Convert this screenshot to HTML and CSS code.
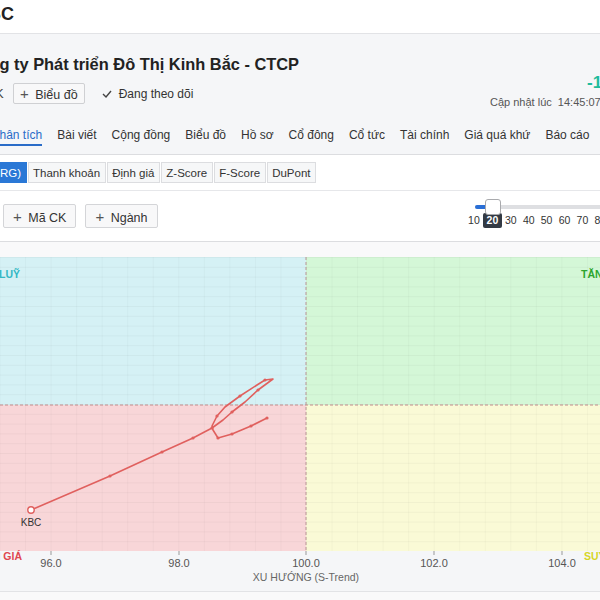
FILE: index.html
```html
<!DOCTYPE html>
<html lang="vi">

<head>
    <meta charset="UTF-8">
    <meta name="viewport" content="width=device-width, initial-scale=1.0">
    <title>KBC - Phân tích</title>
    <link rel="stylesheet" href="styles.css">
</head>

<body>
    <!-- Thanh trên cùng -->
    <div class="topbar">
        <span class="logo">KBC</span>
    </div>

    <!-- Thông tin mã -->
    <div class="stock-head">
        <div class="head-main">
            <div class="head-left">
                <h1 class="company">Tổng Công ty Phát triển Đô Thị Kinh Bắc - CTCP</h1>
                <div class="head-actions">
                    <span class="ticker">K</span>
                    <button class="btn-outline"><span class="plus">+</span> Biểu đồ</button>
                    <span class="follow">
                        <svg class="check" width="10" height="8" viewBox="0 0 10 8">
                            <path d="M1 4 L4 7 L9 1" fill="none" stroke="#444" stroke-width="1.4" />
                        </svg>
                        Đang theo dõi
                    </span>
                </div>
            </div>
            <div class="head-right">
                <div class="change">-1,35 (-4,12%)</div>
                <div class="updated">Cập nhật lúc&nbsp; 14:45:07 | Vol: 12.345.600</div>
            </div>
        </div>

        <nav class="tabs">
            <a class="tab active">Phân tích</a>
            <a class="tab">Bài viết</a>
            <a class="tab">Cộng đồng</a>
            <a class="tab">Biểu đồ</a>
            <a class="tab">Hồ sơ</a>
            <a class="tab">Cổ đông</a>
            <a class="tab">Cổ tức</a>
            <a class="tab">Tài chính</a>
            <a class="tab">Giá quá khứ</a>
            <a class="tab">Báo cáo</a>
        </nav>
    </div>

    <!-- Các loại phân tích -->
    <div class="tool-panel">
        <div class="sub-tabs">
            <button class="sub-tab active">Sức mạnh (RRG)</button>
            <button class="sub-tab">Thanh khoản</button>
            <button class="sub-tab">Định giá</button>
            <button class="sub-tab">Z-Score</button>
            <button class="sub-tab">F-Score</button>
            <button class="sub-tab">DuPont</button>
        </div>

        <div class="controls">
            <div class="add-buttons">
                <button class="btn-add"><span class="plus">+</span> Mã CK</button>
                <button class="btn-add"><span class="plus">+</span> Ngành</button>
            </div>
            <div class="slider">
                <div class="track">
                    <div class="fill"></div>
                    <div class="thumb"></div>
                </div>
                <div class="marks">
                    <span>10</span>
                    <span class="current">20</span>
                    <span>30</span>
                    <span>40</span>
                    <span>50</span>
                    <span>60</span>
                    <span>70</span>
                    <span>80</span>
                </div>
            </div>
        </div>
    </div>

    <!-- Biểu đồ RRG -->
    <div class="chart-wrap">
        <svg class="rrg" width="600" height="334" viewBox="0 0 600 334">
            <defs>
                <pattern id="gridV" x="25.06" y="0" width="25.54" height="9.8" patternUnits="userSpaceOnUse">
                    <path d="M0 0 V9.8" stroke="rgba(0,0,0,0.05)" stroke-width="1" />
                    <path d="M0 0.5 H25.54" stroke="rgba(0,0,0,0.035)" stroke-width="1" />
                </pattern>
            </defs>

            <!-- Bốn góc phần tư -->
            <rect x="0" y="0" width="306" height="148" fill="#d5f1f5" />
            <rect x="306" y="0" width="294" height="148" fill="#d4f7d7" />
            <rect x="0" y="148" width="306" height="146" fill="#f8d6d8" />
            <rect x="306" y="148" width="294" height="146" fill="#fafad6" />
            <rect x="0" y="0" width="600" height="294" fill="url(#gridV)" />

            <line x1="306" y1="0" x2="306" y2="294" stroke="#b89494" stroke-width="1" stroke-dasharray="3 2" />
            <line x1="0" y1="148" x2="600" y2="148" stroke="#c08c8c" stroke-width="1" stroke-dasharray="3 2" />

            <text class="q-label" x="20" y="21" text-anchor="end" fill="#33b8c4">TÍCH LUỸ</text>
            <text class="q-label" x="581" y="21" fill="#2ca52e">TĂNG TRƯỞNG</text>
            <text class="q-label" x="22" y="303" text-anchor="end" fill="#e0474f">GIẢM GIÁ</text>
            <text class="q-label" x="584" y="303" fill="#d6d526">SUY YẾU</text>

            <!-- Đuôi KBC -->
            <polyline fill="none" stroke="#e0605e" stroke-width="1.6" stroke-linejoin="round"
                points="267,161 251,169 232,177 218,181 213,173 212,169 217,159 225,150 240,139 257,128 265,123 273,122 258,133 245,145 232,155 223,163 212,171 193,181 162,195 110,219 31,253" />
            <g fill="#e0605e">
                <circle cx="267" cy="161" r="1.6" />
                <circle cx="251" cy="169" r="1.6" />
                <circle cx="232" cy="177" r="1.6" />
                <circle cx="218" cy="181" r="1.6" />
                <circle cx="217" cy="159" r="1.6" />
                <circle cx="240" cy="139" r="1.6" />
                <circle cx="265" cy="123" r="1.6" />
                <circle cx="258" cy="133" r="1.6" />
                <circle cx="232" cy="155" r="1.6" />
                <circle cx="212" cy="171" r="1.6" />
                <circle cx="193" cy="181" r="1.6" />
                <circle cx="162" cy="195" r="1.6" />
                <circle cx="110" cy="219" r="1.6" />
            </g>
            <circle cx="31" cy="253" r="3.2" fill="#fff" stroke="#e0605e" stroke-width="1.4" />
            <text class="pt-label" x="31" y="269" text-anchor="middle">KBC</text>

            <!-- Trục X -->
            <g stroke="#999" stroke-width="1">
                <line x1="51" y1="294" x2="51" y2="298" />
                <line x1="179" y1="294" x2="179" y2="298" />
                <line x1="306" y1="294" x2="306" y2="298" />
                <line x1="434" y1="294" x2="434" y2="298" />
                <line x1="562" y1="294" x2="562" y2="298" />
            </g>
            <g class="tick" text-anchor="middle">
                <text x="51" y="310">96.0</text>
                <text x="179" y="310">98.0</text>
                <text x="306" y="310">100.0</text>
                <text x="434" y="310">102.0</text>
                <text x="562" y="310">104.0</text>
            </g>
            <text class="axis-title" x="306" y="324" text-anchor="middle">XU HƯỚNG (S-Trend)</text>
        </svg>
    </div>
</body>

</html>
```

FILE: styles.css
```css
/* Reset */
* {
    margin: 0;
    padding: 0;
    box-sizing: border-box;
    font-family: "Liberation Sans", Arial, sans-serif;
}

body {
    width: 600px;
    height: 600px;
    overflow: hidden;
    background-color: #f9f9fa;
    color: #333;
}

button {
    font-family: inherit;
    color: #333;
    cursor: pointer;
}

/* Top bar */
.topbar {
    height: 34px;
    background-color: #fff;
    border-bottom: 1px solid #e2e3e6;
    white-space: nowrap;
}

.topbar .logo {
    display: inline-block;
    margin-left: -25px;
    font-size: 18px;
    font-weight: bold;
    line-height: 28px;
    color: #222;
}

/* Stock header */
.stock-head {
    background-color: #f5f6f8;
    border-bottom: 1px solid #dcdde0;
}

.head-main {
    display: flex;
    justify-content: space-between;
    height: 93px;
}

.head-left {
    padding-top: 19px;
    white-space: nowrap;
}

.company {
    margin-left: -77px;
    font-size: 16.4px;
    font-weight: bold;
    color: #222;
    line-height: 22px;
}

.head-actions {
    display: flex;
    align-items: center;
    margin-top: 8px;
    font-size: 12px;
}

.ticker {
    margin-left: -5px;
    width: 18px;
    font-size: 13px;
    color: #444;
}

.btn-outline {
    height: 21px;
    padding: 0 6px;
    border: 1px solid #cfd0d3;
    background-color: #f8f8f9;
    font-size: 12.5px;
    border-radius: 2px;
}

.plus {
    font-size: 15px;
    color: #555;
    margin-right: 3px;
}

.follow {
    display: flex;
    align-items: center;
    margin-left: 17px;
    color: #333;
}

.check {
    margin-right: 7px;
}

.head-right {
    width: 110px;
    padding-top: 39px;
    white-space: nowrap;
    overflow: hidden;
    font-size: 11px;
}

.change {
    padding-left: 97px;
    font-size: 17px;
    font-weight: bold;
    color: #1dbb9c;
    line-height: 20px;
}

.updated {
    margin-top: 3px;
    color: #555;
}

/* Main tabs */
.tabs {
    display: flex;
    height: 27px;
    margin-left: -16px;
    white-space: nowrap;
}

.tab {
    position: relative;
    padding: 0 7.5px;
    font-size: 12px;
    color: #333;
    line-height: 16px;
}

.tab.active {
    color: #2a6cc8;
}

.tab.active::after {
    content: "";
    position: absolute;
    left: 7.5px;
    right: 7.5px;
    top: 17px;
    height: 2px;
    background-color: #2a6cc8;
}

/* Tool panel */
.tool-panel {
    background-color: #fff;
    border-bottom: 1px solid #dcdde0;
}

.sub-tabs {
    display: flex;
    padding: 7px 0 7px 0;
    margin-left: -74px;
    border-bottom: 1px solid #e6e7ea;
}

.sub-tab {
    height: 21px;
    padding: 0 4.5px;
    margin-right: 1px;
    border: 1px solid #dcdde0;
    background-color: #f6f7f8;
    font-size: 11.5px;
    white-space: nowrap;
}

.sub-tab.active {
    background-color: #2a78d6;
    border-color: #2a78d6;
    color: #fff;
}

.controls {
    display: flex;
    justify-content: space-between;
    height: 50px;
}

.add-buttons {
    display: flex;
    gap: 9px;
    padding-top: 13px;
    padding-left: 3px;
}

.btn-add {
    height: 24px;
    padding: 0 9px;
    border: 1px solid #d4d5d8;
    background-color: #f8f8f9;
    border-radius: 2px;
    font-size: 12.5px;
}

.slider {
    width: 135px;
    padding-top: 7px;
    overflow: hidden;
}

.track {
    position: relative;
    height: 4px;
    margin: 7px 0 0 10px;
    width: 160px;
    background-color: #dedfe2;
    border-radius: 2px;
}

.fill {
    width: 15px;
    height: 4px;
    background-color: #2a6fd6;
    border-radius: 2px;
}

.thumb {
    position: absolute;
    left: 10px;
    top: -6px;
    width: 16px;
    height: 16px;
    background-color: #fff;
    border: 1px solid #a9aaad;
    border-radius: 3px;
}

.marks {
    display: flex;
    margin-top: 4px;
    width: 160px;
    white-space: nowrap;
}

.marks span {
    width: 17.9px;
    flex: none;
    text-align: center;
    font-size: 10.5px;
    line-height: 15px;
    color: #333;
}

.marks .current {
    width: 19px;
    background-color: #333a44;
    color: #fff;
    border-radius: 2px;
    font-weight: bold;
}

/* Chart */
.chart-wrap {
    margin-top: 15px;
    height: 335px;
    background-color: #f5f6f8;
    border-bottom: 1px solid #e2e3e6;
}

.rrg {
    display: block;
}

.q-label {
    font-size: 10.5px;
    font-weight: bold;
}

.pt-label {
    font-size: 10px;
    fill: #333;
}

.tick {
    font-size: 11px;
    fill: #555;
}

.axis-title {
    font-size: 10.5px;
    fill: #666;
}
```
